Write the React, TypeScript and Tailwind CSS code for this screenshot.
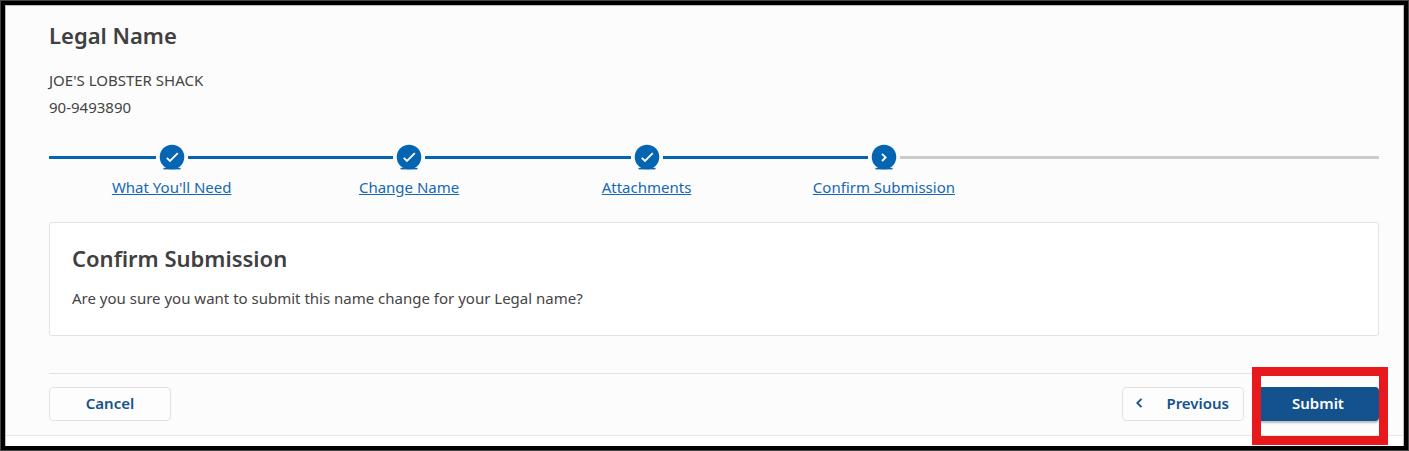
import React from "react";

type Step = { label: string; done: boolean };

const steps: Step[] = [
  { label: "What You'll Need", done: true },
  { label: "Change Name", done: true },
  { label: "Attachments", done: true },
  { label: "Confirm Submission", done: false },
];

function StepIcon({ done }: { done: boolean }) {
  return (
    <svg viewBox="0 0 32 26" className="h-[26px] w-8 shrink-0" aria-hidden="true">
      <circle cx="16" cy="13" r="12.3" fill="#0465b3" />
      <rect x="7.5" y="23.8" width="17" height="1.6" fill="#0465b3" />
      {done ? (
        <path d="M10.8 13.8l3.2 3.2 7.8-7.8" fill="none" stroke="#fff" strokeWidth="1.8" />
      ) : (
        <path d="M14 9.8l3.6 3.6-3.6 3.6" fill="none" stroke="#fff" strokeWidth="1.8" />
      )}
    </svg>
  );
}

function StepItem({ label, done }: Step) {
  return (
    <li className="min-w-0 flex-1">
      <a href="#" className="flex flex-col items-center text-[#1568b3] underline">
        <span className="flex w-full items-center">
          <span className="h-[3px] flex-1 bg-[#0465b3]" />
          <StepIcon done={done} />
          <span className={done ? "h-[3px] flex-1 bg-[#0465b3]" : "h-[3px] flex-1 bg-[#cccccc]"} />
        </span>
        <span className="mt-[5px] whitespace-nowrap leading-6">{label}</span>
      </a>
    </li>
  );
}

const secondaryButton =
  "flex h-[34px] w-[122px] items-center rounded-[4px] border border-[#e2e2e2] bg-[#fdfdfd] pb-0.5 font-semibold text-[#14528d]";

export default function App() {
  return (
    <div className="border border-[#444444] bg-white font-['Noto_Sans',sans-serif] text-[15px] text-[#444444]">
      <div className="border-4 border-black">
        <div className="border-x border-t border-[#bbbbbb] pb-2.5">
          <main className="border-b border-[#e8e8e8] bg-[#fcfcfc] pt-[13px] pr-6 pb-3.5 pl-[43px]">
            <h1 className="text-[22px] leading-8 font-semibold text-[#404040]">Legal Name</h1>
            <div className="mt-4 leading-[27px]">
              <p>JOE'S LOBSTER SHACK</p>
              <p>90-9493890</p>
            </div>

            <nav aria-label="Progress" className="mt-[23px]">
              <ol className="flex">
                <li aria-hidden="true" className="flex h-[26px] w-1 items-center">
                  <span className="h-[3px] w-full bg-[#0465b3]" />
                </li>
                {steps.map((step) => (
                  <StepItem key={step.label} {...step} />
                ))}
                <li aria-hidden="true" className="flex h-[26px] w-[28.3%] items-center">
                  <span className="h-[3px] w-full bg-[#cccccc]" />
                </li>
              </ol>
            </nav>

            <section className="mt-[23px] rounded-[3px] border border-[#e2e2e2] bg-white px-[22px] pt-[19px] pb-6">
              <h2 className="text-[22px] leading-8 font-semibold text-[#404040]">Confirm Submission</h2>
              <p className="mt-[11px] leading-[26px]">
                Are you sure you want to submit this name change for your Legal name?
              </p>
            </section>

            <footer className="mt-[37px] flex items-center justify-between border-t border-[#e2e2e2] pt-[13px]">
              <button type="button" className={`${secondaryButton} justify-center`}>
                Cancel
              </button>
              <div className="flex gap-[13px]">
                <button type="button" className={`${secondaryButton} justify-between pr-3.5 pl-3`}>
                  <svg viewBox="0 0 10 12" className="h-3 w-2.5" aria-hidden="true">
                    <path d="M6.5 1.8L2.3 6l4.2 4.2" fill="none" stroke="#14528d" strokeWidth="1.8" />
                  </svg>
                  Previous
                </button>
                <div className="relative">
                  <button
                    type="button"
                    className="h-[34px] w-[122px] rounded-[4px] bg-[#14528d] pb-0.5 font-semibold text-white shadow-[0_2px_2px_rgba(0,0,0,0.25)]"
                  >
                    Submit
                  </button>
                  <div className="pointer-events-none absolute -top-5 -right-[9px] -bottom-6 -left-[5px] border-[9px] border-[#e8191c]" />
                </div>
              </div>
            </footer>
          </main>
        </div>
      </div>
    </div>
  );
}
